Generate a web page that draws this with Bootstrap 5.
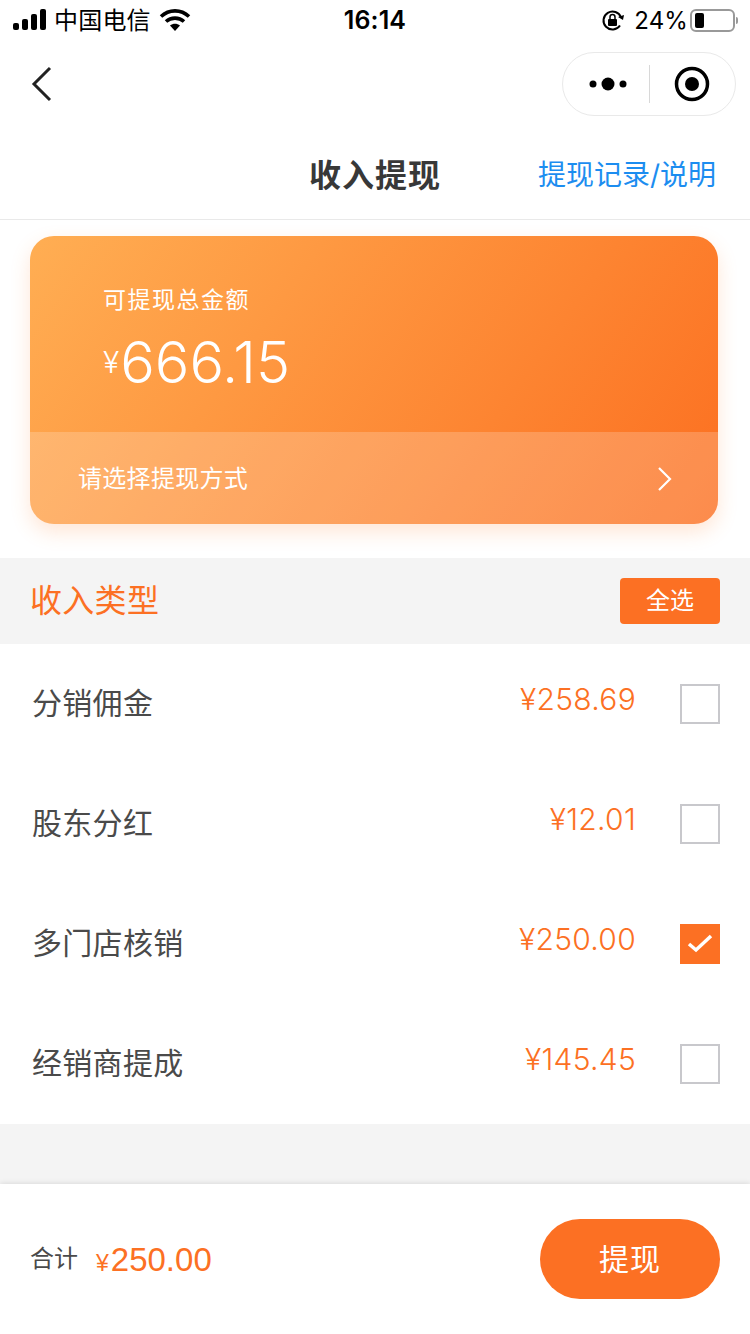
<!DOCTYPE html>
<html lang="zh-CN">
<head>
  <meta charset="UTF-8" />
  <meta name="viewport" content="width=device-width, initial-scale=1" />
  <title>收入提现</title>
  <link href="https://cdn.jsdelivr.net/npm/bootstrap@5.3.0/dist/css/bootstrap.min.css" rel="stylesheet" />
  <style>
    html, body { height: 100%; }
    body {
      width: 750px;
      height: 1334px;
      overflow: hidden;
      background: #f4f4f4;
      font-family: Inter, "Liberation Sans", "Noto Sans CJK SC", sans-serif;
      color: #404040;
    }
    .app { height: 1334px; }
    .status-bar { height: 40px; padding: 0 12px 0 13px; color: #000; font-size: 24px; background: #fff; }
    .status-carrier { padding-top: 2px; margin-left: 7px; letter-spacing: .2px; }
    .status-time { font-size: 25px; font-weight: 600; padding-top: 2px; letter-spacing: .1px; margin-left: -1px; }
    .status-side { width: 300px; }
    .status-pct { font-size: 24px; letter-spacing: .1px; padding-top: 2px; margin: 0 2px 0 9px; }
    .batt { width: 45px; height: 23px; border: 2px solid #999; border-radius: 6px; padding: 2px 3px; }
    .batt-fill { width: 9px; height: 100%; background: #000; border-radius: 2px; }
    .batt-tip { width: 2px; height: 7px; background: #999; border-radius: 0 2px 2px 0; margin-left: 1px; }
    .wx-bar { height: 88px; padding: 8px 14px 8px 28px; background: #fff; }
    .capsule { width: 174px; height: 64px; border: 1px solid #e9e9e9; border-radius: 32px; }
    .capsule-part { width: 86px; }
    .capsule-dots { padding-left: 4px; }
    .capsule-line { width: 1px; height: 38px; background: #d8d8d8; }
    .title-bar { height: 92px; padding-top: 4px; background: #fff; border-bottom: 1px solid #e9e9e9; position: relative; }
    .page-title { font-size: 32px; font-weight: 600; color: #383838; letter-spacing: 1px; margin: 0; line-height: 1; }
    .title-link { position: absolute; right: 34px; top: 27px; font-size: 28px; color: #1c8df0; text-decoration: none; line-height: 40px; }
    .card-wrap { background: #fff; padding: 16px 32px 34px 30px; }
    .money-card {
      height: 288px; border-radius: 24px; overflow: hidden; color: #fff;
      background: linear-gradient(125deg, #ffae53 0%, #fc6f20 100%);
      box-shadow: 0 8px 20px rgba(253, 130, 50, .2);
    }
    .money-top { height: 196px; padding: 46px 0 0 73px; }
    .money-label { font-size: 23px; line-height: 36px; letter-spacing: 1.500px; }
    .money-val { font-size: 57.500px; line-height: 70px; margin-top: 9px; font-weight: 300; }
    .money-val small { font-size: 30px; margin-right: 1px; position: relative; top: -10px; }
    .money-way { height: 92px; padding: 2px 45px 0 48px; background: rgba(255, 255, 255, .2); font-size: 24px; letter-spacing: .3px; }
    .type-head { height: 86px; padding: 0 30px; background: #f4f4f4; }
    .type-title { font-size: 32px; color: #fc7023; line-height: 1; letter-spacing: .3px; }
    .all-btn { width: 100px; height: 46px; padding: 0; border: 0; border-radius: 4px; background: #fc7023; color: #fff; font-size: 24px; line-height: 46px; }
    .income-list { background: #fff; height: 480px; }
    .income-row { height: 120px; padding: 0 30px 0 32px; border: 0; }
    .income-name { font-size: 30px; color: #4a4a4a; line-height: 1; letter-spacing: .3px; margin-top: -3px; }
    .income-amt { font-size: 30px; font-weight: 300; color: #fc7023; line-height: 1; margin: -10px 44px 0 0; letter-spacing: .3px; }
    .tick { width: 40px; height: 40px; border: 2px solid #c8c8cc; background: #fff; flex: none; }
    .tick-on { background: #fc7023; border-color: #fc7023; }
    .footer-bar {
      height: 150px; margin-top: 60px; padding: 0 30px; background: #fff;
      box-shadow: 0 -1px 5px rgba(0, 0, 0, .1);
    }
    .sum-label { font-size: 24px; color: #4a4a4a; margin-right: 18px; }
    .sum-amt { font-family: "Liberation Sans", sans-serif; font-size: 33px; color: #fc7023; padding-top: 2px; }
    .sum-amt small { font-size: 23px; margin-right: 2px; }
    .cash-btn { width: 180px; height: 80px; padding: 0; border: 0; border-radius: 40px; background: #fc7023; color: #fff; font-size: 30px; letter-spacing: 1px; }
  </style>
</head>
<body>
  <div class="app d-flex flex-column">
    <div class="status-bar d-flex align-items-center justify-content-between">
      <div class="status-side d-flex align-items-center">
        <svg width="34" height="24" viewBox="0 0 34 24" fill="#000"><rect x="0" y="15" width="6" height="7" rx="2"/><rect x="9" y="11" width="6" height="11" rx="2"/><rect x="18" y="6" width="6" height="16" rx="2"/><rect x="27" y="1" width="6" height="21" rx="2"/></svg>
        <span class="status-carrier">中国电信</span>
        <svg class="ms-2" width="32" height="24" viewBox="0 0 32 24"><path d="M2 8.500C10 1 22 1 30 8.500" fill="none" stroke="#000" stroke-width="3.600"/><path d="M7 13.500C12 9 20 9 25 13.500" fill="none" stroke="#000" stroke-width="3.600"/><path d="M11 17.500C14 15 18 15 21 17.500L16 23Z" fill="#000"/></svg>
      </div>
      <span class="status-time">16:14</span>
      <div class="status-side d-flex align-items-center justify-content-end">
        <svg width="24" height="24" viewBox="0 0 24 24"><path d="M20 9.500A9 9 0 1 0 19 17.500" fill="none" stroke="#000" stroke-width="2"/><path d="M17 9l5 3 1-5z" fill="#000"/><rect x="7" y="11" width="9" height="7" rx="1" fill="#000"/><path d="M9 11V9a2.500 2.500 0 0 1 5 0v2" fill="none" stroke="#000" stroke-width="1.500"/></svg>
        <span class="status-pct">24%</span>
        <div class="batt"><div class="batt-fill"></div></div>
        <div class="batt-tip"></div>
      </div>
    </div>

    <div class="wx-bar d-flex align-items-center justify-content-between">
      <svg width="28" height="36" viewBox="0 0 28 36"><path d="M22 2 6 18l16 16" fill="none" stroke="#222" stroke-width="3"/></svg>
      <div class="capsule d-flex align-items-center">
        <div class="capsule-part capsule-dots d-flex justify-content-center">
          <svg width="38" height="14" viewBox="0 0 38 14" fill="#000"><circle cx="4" cy="7" r="3.500"/><circle cx="19" cy="7" r="6.500"/><circle cx="34" cy="7" r="3.500"/></svg>
        </div>
        <div class="capsule-line"></div>
        <div class="capsule-part d-flex justify-content-center">
          <svg width="36" height="36" viewBox="0 0 36 36"><circle cx="18" cy="18" r="15.500" fill="none" stroke="#000" stroke-width="3.500"/><circle cx="18" cy="18" r="7" fill="#000"/></svg>
        </div>
      </div>
    </div>

    <div class="title-bar d-flex align-items-center justify-content-center">
      <h1 class="page-title">收入提现</h1>
      <a class="title-link" href="#">提现记录/说明</a>
    </div>

    <div class="card-wrap">
      <div class="money-card">
        <div class="money-top">
          <div class="money-label">可提现总金额</div>
          <div class="money-val"><small>¥</small>666.15</div>
        </div>
        <div class="money-way d-flex align-items-center justify-content-between">
          <span>请选择提现方式</span>
          <svg width="16" height="26" viewBox="0 0 16 26"><path d="M2 2l11 11L2 24" fill="none" stroke="#fff" stroke-width="2.200"/></svg>
        </div>
      </div>
    </div>

    <div class="type-head d-flex align-items-center justify-content-between">
      <span class="type-title">收入类型</span>
      <button type="button" class="btn all-btn">全选</button>
    </div>

    <div class="list-group list-group-flush income-list rounded-0" id="incomeList"></div>

    <div class="footer-bar d-flex align-items-center justify-content-between">
      <div class="d-flex align-items-center">
        <span class="sum-label">合计</span>
        <span class="sum-amt"><small>¥</small>250.00</span>
      </div>
      <button type="button" class="btn cash-btn">提现</button>
    </div>
  </div>

  <script src="https://cdn.jsdelivr.net/npm/bootstrap@5.3.0/dist/js/bootstrap.bundle.min.js"></script>
  <script>
    const tiposRenda = [
      { nome: '分销佣金', valor: '¥258.69', marcado: false },
      { nome: '股东分红', valor: '¥12.01', marcado: false },
      { nome: '多门店核销', valor: '¥250.00', marcado: true },
      { nome: '经销商提成', valor: '¥145.45', marcado: false }
    ];

    const lista = document.getElementById('incomeList');
    tiposRenda.forEach(item => {
      const check = item.marcado
        ? '<svg width="36" height="36" viewBox="0 0 36 36"><path d="M7 18l7 6L29 10" fill="none" stroke="#fff" stroke-width="3.500"/></svg>'
        : '';
      lista.innerHTML += `
        <div class="list-group-item income-row d-flex align-items-center">
          <span class="income-name me-auto">${item.nome}</span>
          <span class="income-amt">${item.valor}</span>
          <span class="tick ${item.marcado ? 'tick-on' : ''} d-flex align-items-center justify-content-center">${check}</span>
        </div>`;
    });
  </script>
</body>
</html>
